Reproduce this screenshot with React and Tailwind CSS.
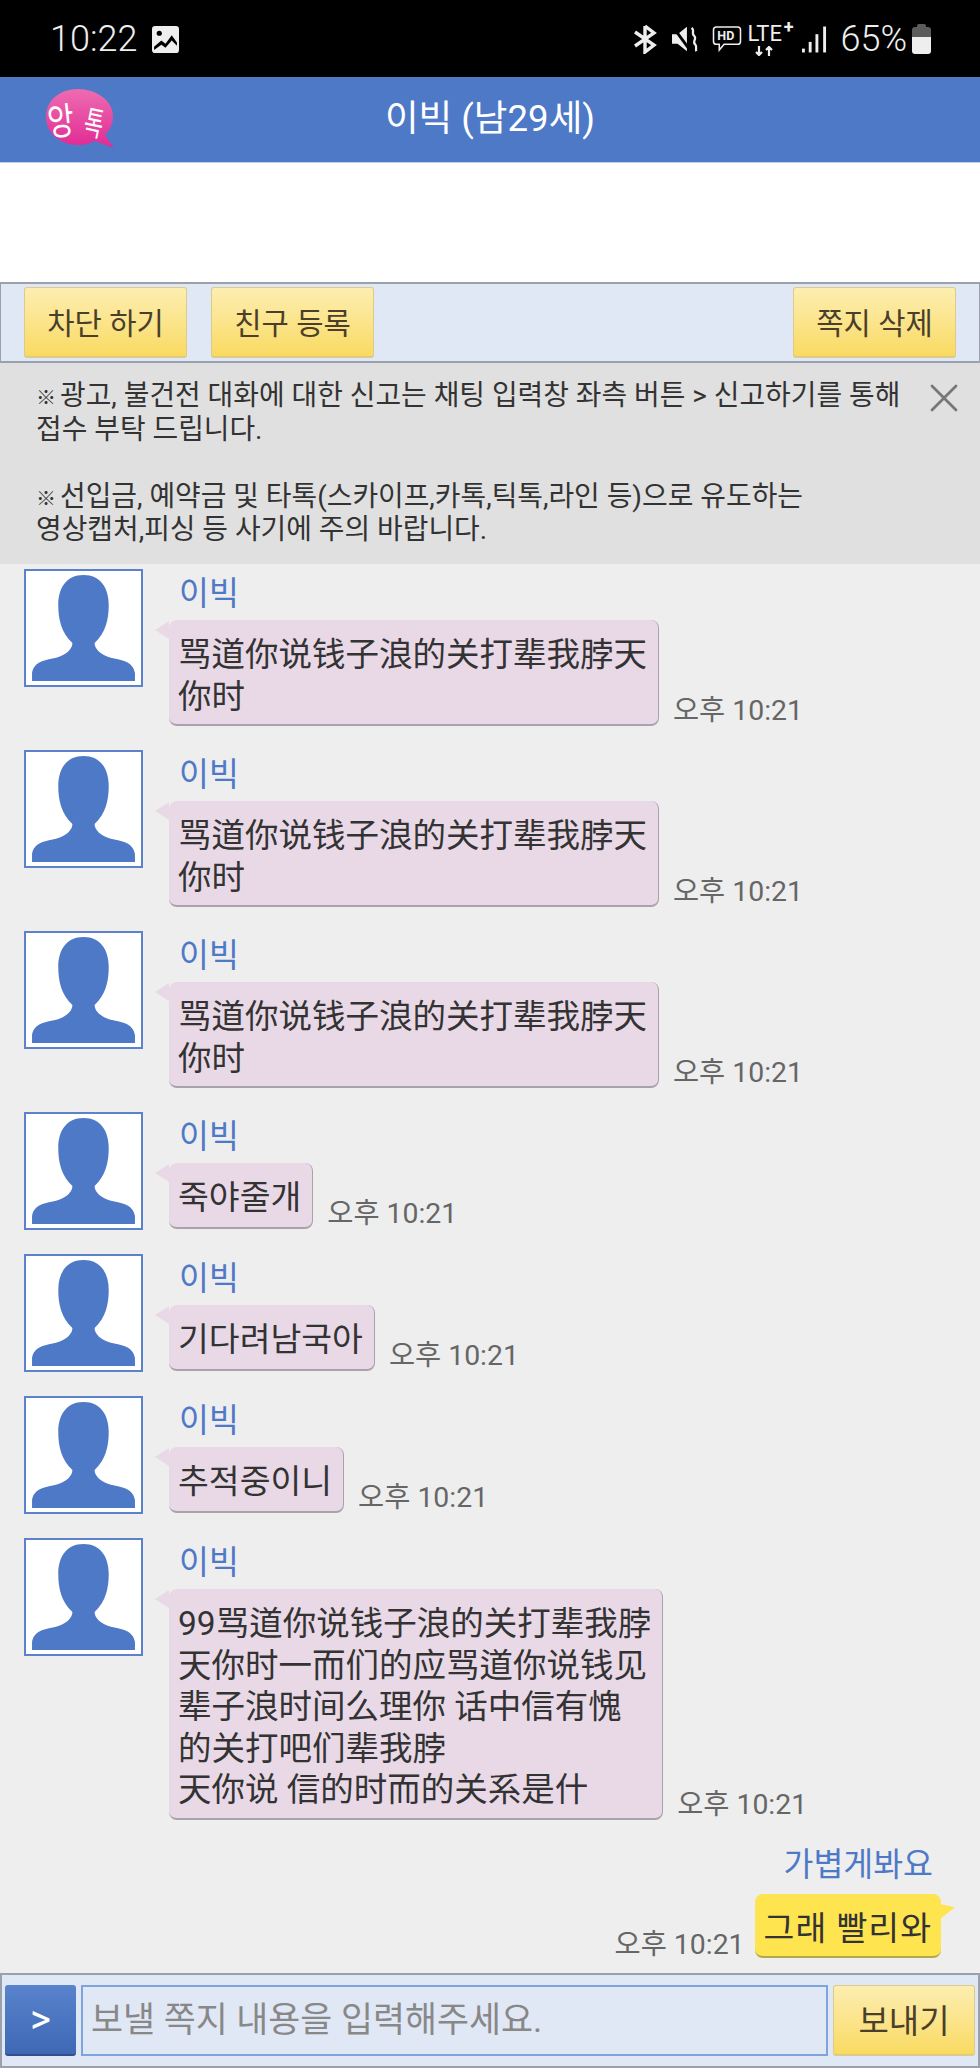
import { X } from 'lucide-react';

const longText = '骂道你说钱子浪的关打辈我脖天\n你时';
const messages = [
  { text: longText },
  { text: longText },
  { text: longText },
  { text: '죽야줄개' },
  { text: '기다려남국아' },
  { text: '추적중이니' },
  { text: '99骂道你说钱子浪的关打辈我脖\n天你时一而们的应骂道你说钱见\n辈子浪时间么理你 话中信有愧\n的关打吧们辈我脖\n天你说 信的时而的关系是什' },
];

const font = "font-['Roboto','Noto_Sans_CJK_KR','Noto_Sans_CJK_SC',sans-serif]";

function Avatar() {
  return (
    <div className="w-[119px] h-[118px] shrink-0 border-2 border-[#5b82cb] bg-white p-[2px]">
      <svg viewBox="0 0 110 110" preserveAspectRatio="none" className="w-full h-full block">
        <path
          fill="#4e79c7"
          d="M55 2C38 2 30 15 30 32C30 46 33 60 44 70C44 76 38 82 27 85C18 87 6 88 4 100V108H106V100C104 88 92 87 83 85C72 82 66 76 66 70C77 60 80 46 80 32C80 15 72 2 55 2Z"
        />
      </svg>
    </div>
  );
}

function Message({ text }) {
  return (
    <div className="flex mb-[24px] pl-6">
      <Avatar />
      <div className="ml-[26px]">
        <div className="h-[51px] pl-[10px] pt-[4px] text-[32.5px] leading-[42px] text-[#4e79c7]">이빅</div>
        <div className="flex items-end">
          <div className="relative min-h-[66px] rounded-[8px] bg-[#e9d9e7] border-b-2 border-r border-[#aaa2aa] pl-[9px] pr-[11px] pt-[14px] pb-[7px] text-[33.5px] leading-[41.5px] text-[#333] whitespace-pre-line">
            <svg viewBox="0 0 14 18" className="absolute left-[-14px] top-[1px] w-[14px] h-[18px]">
              <path d="M14 0L0 9L14 18Z" fill="#e9d9e7" />
            </svg>
            {text}
          </div>
          <span className="ml-[14px] -mb-[3px] text-[28.4px] leading-[36px] text-[#666] whitespace-nowrap">오후 10:21</span>
        </div>
      </div>
    </div>
  );
}

function YellowButton({ label, className }) {
  return (
    <button className={`h-[71px] pt-1 rounded-[3px] border border-[#dccb8a] border-b-2 bg-gradient-to-b from-[#fdeeb0] to-[#f9da60] text-[#4a3f2a] ${className}`}>
      {label}
    </button>
  );
}

function Logo() {
  return (
    <svg viewBox="0 0 72 64" className="w-[72px] h-[64px]">
      <defs>
        <linearGradient id="logo-pink" x1="0" y1="0" x2="0" y2="1">
          <stop offset="0%" stopColor="#ee6cb0" />
          <stop offset="100%" stopColor="#e02a94" />
        </linearGradient>
      </defs>
      <path
        d="M34 2C16 2 2 13 2 30C2 46 16 58 34 58C41 58 47 56 51 54L70 61L61 48C66 42 69 37 69 30C69 13 52 2 34 2Z"
        fill="url(#logo-pink)"
      />
      <text x="0" y="0" fontSize="34" fill="#ffffff" transform="translate(5 49) rotate(-6) scale(0.85 1.1)" fontFamily="Noto Sans CJK KR, sans-serif">앙</text>
      <text x="0" y="0" fontSize="30" fill="#ffffff" transform="translate(38 46) rotate(12) scale(0.7 1.1)" fontFamily="Noto Sans CJK KR, sans-serif">톡</text>
    </svg>
  );
}

function StatusBar() {
  return (
    <div className="h-[77px] shrink-0 bg-black flex items-center pl-[50px] pr-[49px] text-[#eeeeee]">
      <span className="text-[36px] leading-none font-light">10:22</span>
      <svg viewBox="0 0 26 26" className="w-[27px] h-[27px] ml-[15px] mt-[2px]">
        <rect x="0" y="0" width="26" height="26" rx="3" fill="#eeeeee" />
        <circle cx="7" cy="7" r="2.5" fill="#000" />
        <path d="M2 20L9 14L13 17L19 9L24 16V19L19 14L13 21L9 18L2 23Z" fill="#000" />
      </svg>
      <div className="flex-1" />
      <svg viewBox="0 0 26 30" className="w-[26px] h-[30px]" fill="none" stroke="#eee" strokeWidth="3.4">
        <path d="M13 2V28L22 21L3 8M13 2L22 9L3 22" />
      </svg>
      <svg viewBox="0 0 30 28" className="w-[28px] h-[28px] ml-[14px]">
        <path d="M0 9H6L16 1V27L6 19H0Z" fill="#eee" />
        <path d="M1 1L20 27" stroke="#000" strokeWidth="3" />
        <path d="M21 2C25 5 20 8 24 11C27 14 21 17 25 20C27 22 25 25 26 27" fill="none" stroke="#eee" strokeWidth="2.4" />
      </svg>
      <svg viewBox="0 0 30 28" className="w-[30px] h-[27px] ml-[12px]" fill="none" stroke="#eee" strokeWidth="1.6">
        <path d="M4 2H26Q29 2 29 5V17Q29 20 26 20H12L7 26V20H4Q1 20 1 17V5Q1 2 4 2Z" />
        <text x="5" y="16" fontSize="13" fontWeight="700" fill="#eee" stroke="none" fontFamily="Roboto, sans-serif">HD</text>
      </svg>
      <div className="relative w-[46px] h-[34px] ml-[5px]">
        <span className="absolute left-0 top-[2px] text-[22px] leading-[20px] text-[#eee]">LTE</span>
        <span className="absolute right-0 top-[-4px] text-[18px] leading-[18px] font-bold text-[#eee]">+</span>
        <svg viewBox="0 0 20 10" className="absolute left-[7px] top-[24px] w-[20px] h-[10px]" stroke="#eee" strokeWidth="2.2" fill="none">
          <path d="M5 0V9M2 6L5 9L8 6M15 10V1M12 4L15 1L18 4" />
        </svg>
      </div>
      <svg viewBox="0 0 26 28" className="w-[25px] h-[28px] ml-[9px]" fill="#eee">
        <rect x="0" y="24" width="3" height="4" />
        <rect x="7" y="17" width="3" height="11" />
        <rect x="14" y="9" width="3" height="19" />
        <rect x="22" y="1" width="3" height="27" />
      </svg>
      <span className="ml-[13px] text-[36px] leading-none font-light">65%</span>
      <div className="ml-[5px] w-[19px] h-[30px] flex flex-col">
        <div className="mx-auto w-[9px] h-[3px] rounded-t-[2px] bg-[#5c5c5c]" />
        <div className="h-[10px] rounded-t-[3px] bg-[#5c5c5c]" />
        <div className="flex-1 rounded-b-[3px] bg-[#eeeeee]" />
      </div>
    </div>
  );
}

function Mark() {
  return <span className="inline-block w-[24px] text-[20px] leading-none">※</span>;
}

export default function App() {
  return (
    <div className={`w-[980px] h-[2068px] flex flex-col overflow-hidden bg-[#eeeeee] ${font}`}>
      <StatusBar />

      {/* Header */}
      <div className="relative h-[86px] shrink-0 bg-[#4e79c7] border-b border-[#b9d0ee] flex items-center justify-center">
        <div className="absolute left-[44px] top-[10px]">
          <Logo />
        </div>
        <span className="text-[36.6px] text-white">이빅 (남29세)</span>
      </div>

      {/* Ad space */}
      <div className="h-[119px] shrink-0 bg-white" />

      {/* Toolbar */}
      <div className="h-[81px] shrink-0 bg-[#e0e7f5] border-y-2 border-x border-[#9aa1ad] flex items-center pl-[23px] pr-[23px]">
        <YellowButton label="차단 하기" className="w-[163px] text-[29.7px]" />
        <YellowButton label="친구 등록" className="w-[163px] ml-[24px] text-[29.7px]" />
        <YellowButton label="쪽지 삭제" className="w-[163px] ml-auto text-[29.7px]" />
      </div>

      {/* Notice */}
      <div className="relative h-[201px] shrink-0 bg-[#e0e0e0] pl-[36px] pt-[16px] text-[27.9px] leading-[33.6px] text-[#333]">
        <div><Mark />광고, 불건전 대화에 대한 신고는 채팅 입력창 좌측 버튼 &gt; 신고하기를 통해</div>
        <div className="mb-[33.6px]">접수 부탁 드립니다.</div>
        <div><Mark />선입금, 예약금 및 타톡(스카이프,카톡,틱톡,라인 등)으로 유도하는</div>
        <div>영상캡처,피싱 등 사기에 주의 바랍니다.</div>
        <X className="absolute right-[12px] top-[11px] text-[#777]" size={48} strokeWidth={1.4} />
      </div>

      {/* Chat */}
      <div className="flex-1 overflow-hidden pt-[5px]">
        {messages.map((m, i) => (
          <Message key={i} text={m.text} />
        ))}
        <div className="pr-[47px] text-right text-[32.5px] leading-[42px] text-[#4e79c7]">가볍게봐요</div>
        <div className="flex items-end justify-end pr-[39px] mt-[8px]">
          <span className="mr-[10px] -mb-[5px] text-[28.4px] leading-[36px] text-[#666] whitespace-nowrap">오후 10:21</span>
          <div className="relative rounded-[8px] bg-[#fee44f] border-b-2 border-[#b5a64a] px-[9px] pt-[14px] pb-[7px] text-[33.5px] leading-[41.5px] tracking-[1px] text-[#333]">
            그래 빨리와
            <svg viewBox="0 0 14 14" className="absolute right-[-14px] top-[10px] w-[15px] h-[15px]">
              <path d="M0 0L14 3L0 14Z" fill="#fee44f" />
            </svg>
          </div>
        </div>
      </div>

      {/* Input bar */}
      <div className="h-[95px] shrink-0 bg-[#e0e7f5] border-2 border-[#9aa1ad] flex items-center pl-[3px] pr-[3px] gap-[5px]">
        <button className="w-[71px] h-[71px] rounded-[3px] bg-gradient-to-b from-[#5a83cd] to-[#3f68b5] border-b-2 border-[#2f4f8f] text-[40px] leading-none text-white">&gt;</button>
        <div className="flex-1 h-[71px] border-2 border-[#7fa3dc] bg-[#e0e7f5] flex items-center pl-[8px] text-[34.8px] text-[#888]">
          보낼 쪽지 내용을 입력해주세요.
        </div>
        <YellowButton label="보내기" className="w-[142px] text-[33px]" />
      </div>
    </div>
  );
}
